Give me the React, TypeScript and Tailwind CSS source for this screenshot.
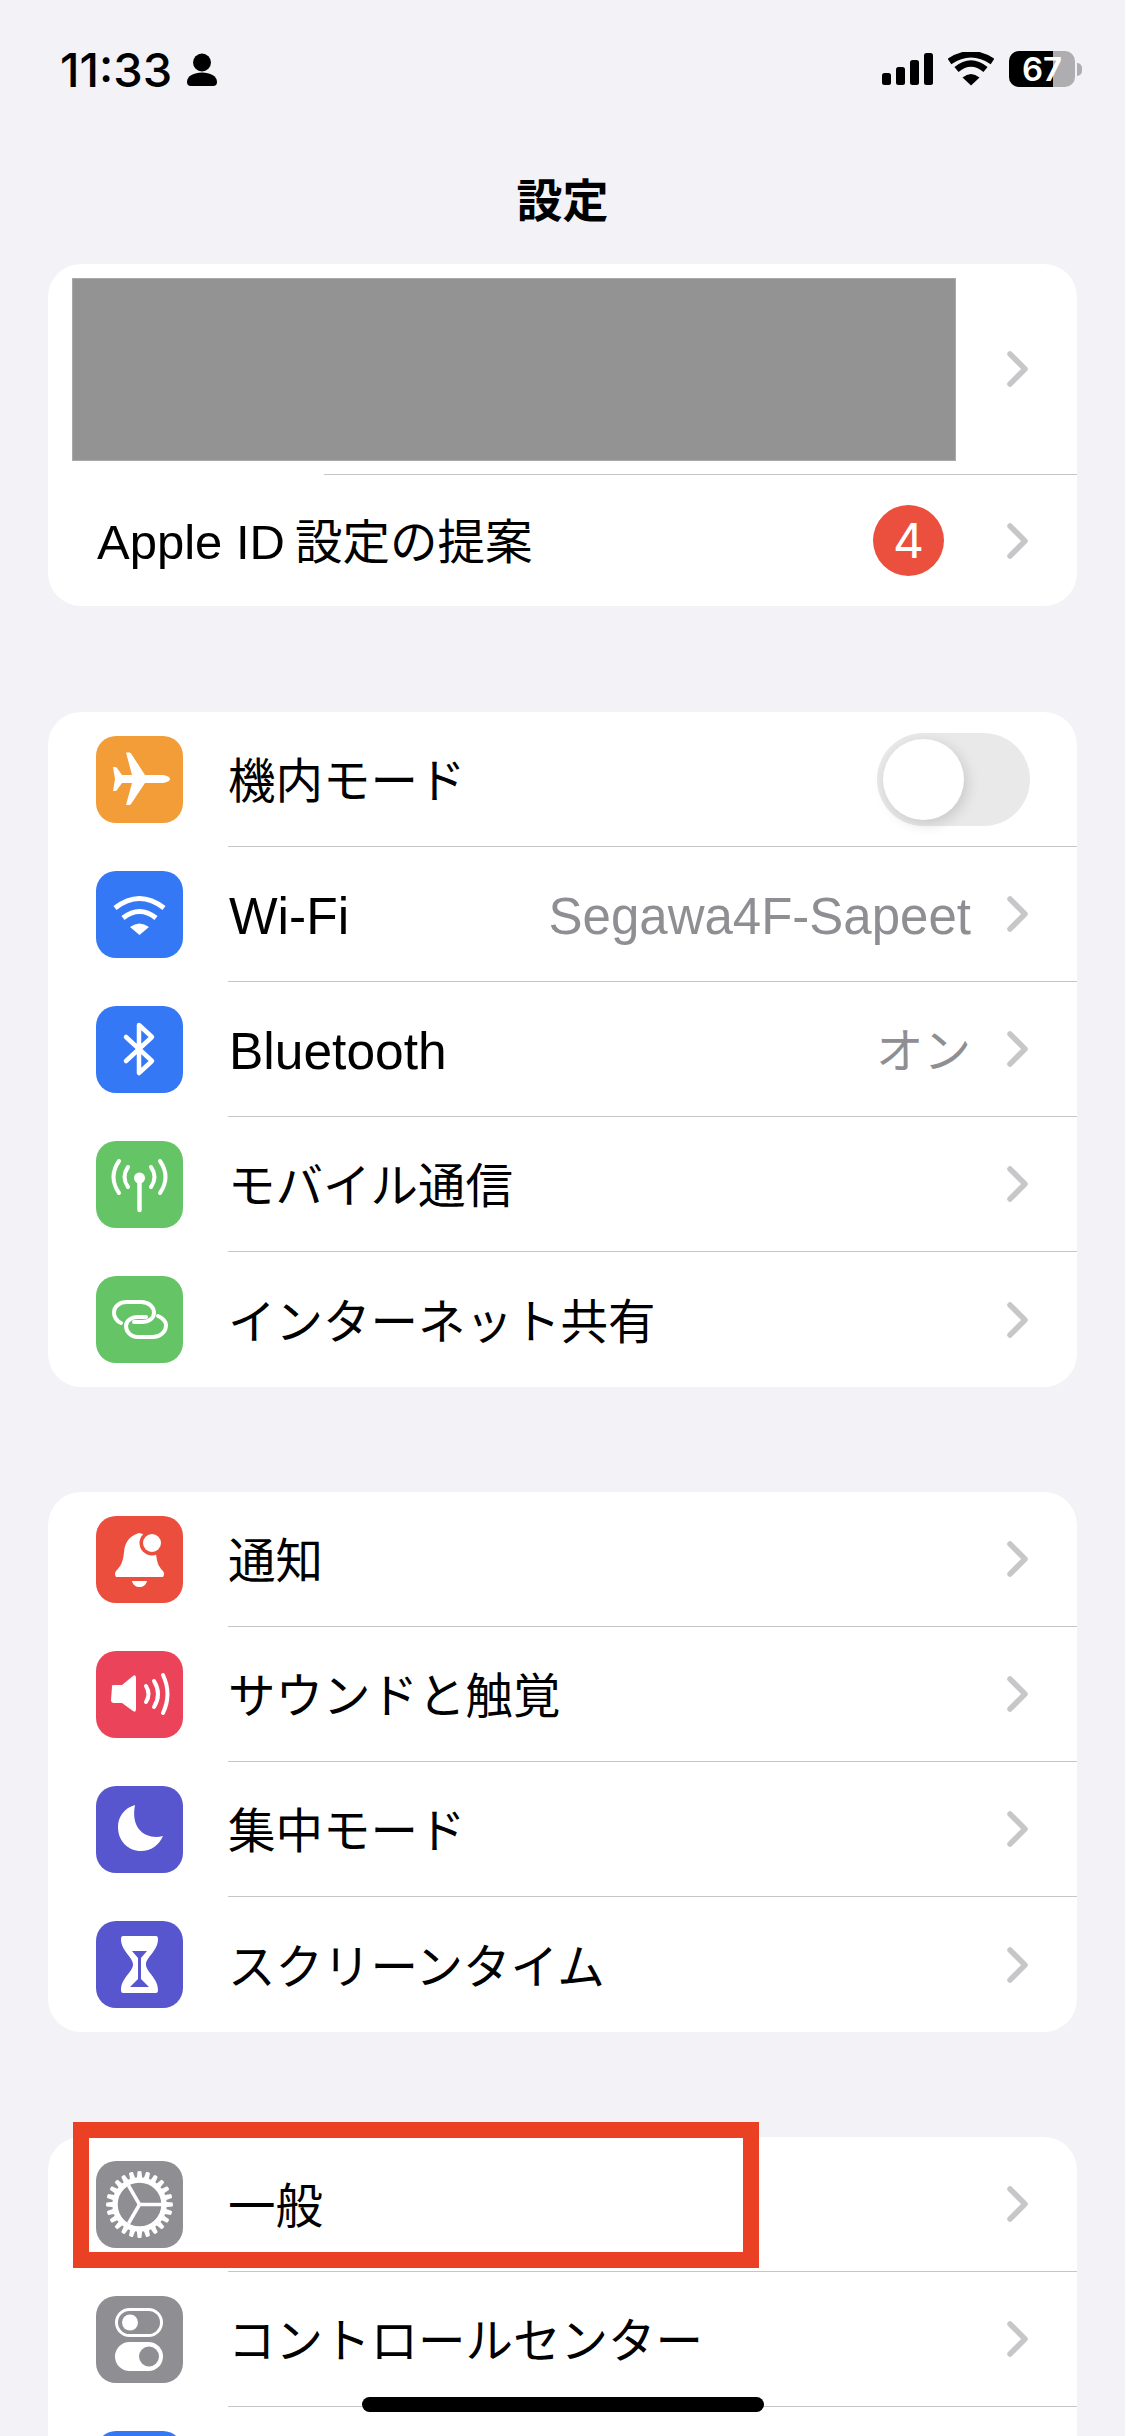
import React from 'react'

type IconProps = { bg: string; children?: React.ReactNode }

function AppIcon({ bg, children }: IconProps) {
  return (
    <div className={`w-[87px] h-[87px] shrink-0 rounded-[20px] ${bg}`}>
      <svg width="87" height="87" viewBox="0 0 87 87">{children}</svg>
    </div>
  )
}

function Chevron() {
  return (
    <svg width="21" height="36" viewBox="0 0 21 36" className="shrink-0">
      <path d="M3 3 L18 18 L3 33" fill="none" stroke="#c7c7c9" strokeWidth="5.5" strokeLinecap="round" strokeLinejoin="round" />
    </svg>
  )
}

const Plane = () => (
  <AppIcon bg="bg-[#f29d38]">
    <path fill="#fff" d="M74 43 C74 41 70 39 65 39 L49 39 L35 17.5 Q34.5 16.5 33 16.5 L30 16.5 L36 39 L26 39 L21 32 Q20.5 31 19 31 L17 31 L19 43 L17 55 L19 55 Q20.5 55 21 54 L26 47 L36 47 L30 69 L33 69 Q34.5 69 35 68 L49 47 L65 47 C70 47 74 45 74 43 Z" />
  </AppIcon>
)

const WifiIcon = () => (
  <AppIcon bg="bg-[#3478f6]">
    <path fill="#fff" d="M43.5 64 L34 56 Q43.5 49 53 56 Z" />
    <path fill="none" stroke="#fff" strokeWidth="5" d="M27 47 Q43.5 34 60 47" />
    <path fill="none" stroke="#fff" strokeWidth="5" d="M19 37 Q43.5 18 68 37" />
  </AppIcon>
)

const BluetoothIcon = () => (
  <AppIcon bg="bg-[#3478f6]">
    <path fill="none" stroke="#fff" strokeWidth="4.5" strokeLinecap="round" strokeLinejoin="round" d="M30 31 L56 55 L43 67 V19 L56 31 L30 55" />
  </AppIcon>
)

const AntennaIcon = () => (
  <AppIcon bg="bg-[#65c466]">
    <circle cx="43.5" cy="37" r="5.5" fill="#fff" />
    <path stroke="#fff" strokeWidth="4.5" strokeLinecap="round" d="M43.5 38 V69" />
    <g fill="none" stroke="#fff" strokeWidth="4" strokeLinecap="round">
      <path d="M32 26 Q25 36 32 46" />
      <path d="M55 26 Q62 36 55 46" />
      <path d="M23 20 Q12 36 23 52" />
      <path d="M64 20 Q75 36 64 52" />
    </g>
  </AppIcon>
)

const LinkIcon = () => (
  <AppIcon bg="bg-[#65c466]">
    <g fill="none" stroke="#fff" strokeWidth="4" strokeLinecap="round">
      <path d="M25 47 C20 45 18 40 18 37 C18 30 24 26 31 26 H45 C53 26 58 31 58 37 C58 42 53 46 46 46 H38" />
      <path d="M62 40 C67 42 70 46 70 49 C70 56 64 61 57 61 H42 C34 61 30 55 30 50 C30 45 35 41 42 41 H50" />
    </g>
  </AppIcon>
)

const BellIcon = () => (
  <AppIcon bg="bg-[#eb4e3d]">
    <path fill="#fff" d="M43 17 C36 19 29 24 28 36 C27 46 25 50 20 55 Q18 58 20 61 H67 Q69 58 67 55 C62 50 61 46 60 38 C58 26 52 18 43 17 Z" />
    <path fill="#fff" d="M36 65 H51 C50 69 47 71 43.5 71 C40 71 37 69 36 65 Z" />
    <circle cx="56" cy="27" r="12.5" fill="#eb4e3d" />
    <circle cx="56" cy="27" r="9" fill="#fff" />
  </AppIcon>
)

const SoundIcon = () => (
  <AppIcon bg="bg-[#eb445a]">
    <path fill="#fff" d="M16 36 Q15 34 18 34 H26 L37 25 Q40 23 40 27 V58 Q40 62 37 60 L26 52 H18 Q15 52 15 49 Z" />
    <g fill="none" stroke="#fff" strokeWidth="4" strokeLinecap="round">
      <path d="M50 35 Q55 43 50 51" />
      <path d="M58 30 Q66 43 58 56" />
      <path d="M67 24 Q76 43 67 62" />
    </g>
  </AppIcon>
)

const MoonIcon = () => (
  <AppIcon bg="bg-[#5856ce]">
    <path fill="#fff" d="M39 19 C28 22 22 31 22 41 C22 55 32 65 45 65 C55 65 63 59 67 50 C52 54 34 45 39 19 Z" />
  </AppIcon>
)

const HourglassIcon = () => (
  <AppIcon bg="bg-[#5856ce]">
    <path fill="#fff" d="M27 15 H60 Q62 15 62 18 C62 30 50 36 50 43.5 C50 51 62 57 62 69 Q62 72 60 72 H27 Q25 72 25 69 C25 57 37 51 37 43.5 C37 36 25 30 25 18 Q25 15 27 15 Z" />
    <path fill="#5856ce" d="M36 30 H51 L45 37 V58 L53 66 H34 L42 58 V37 Z" />
  </AppIcon>
)

const GearIcon = () => (
  <AppIcon bg="bg-[#8e8e93]">
    <circle cx="43.5" cy="43.5" r="24.5" fill="none" stroke="#fff" strokeWidth="5.5" />
    {Array.from({ length: 24 }).map((_, i) => (
      <path key={i} d="M40.5 21 L41.5 10.5 Q43.5 9.5 45.5 10.5 L46.5 21 Z" fill="#fff" transform={`rotate(${i * 15} 43.5 43.5)`} />
    ))}
    <g stroke="#fff" strokeWidth="3.5">
      <path d="M43.5 43.5 H66" />
      <path d="M43.5 43.5 L32.5 24.5" />
      <path d="M43.5 43.5 L32.5 62.5" />
    </g>
  </AppIcon>
)

const SwitchesIcon = () => (
  <AppIcon bg="bg-[#8e8e93]">
    <rect x="20.5" y="13.5" width="45" height="26" rx="13" fill="none" stroke="#fff" strokeWidth="3" />
    <circle cx="34" cy="26.5" r="8" fill="#fff" />
    <rect x="19" y="46" width="48" height="29" rx="14.5" fill="#fff" />
    <circle cx="53" cy="60.5" r="10" fill="#8e8e93" />
  </AppIcon>
)

function Row({ icon, label, value, latin, kanaValue, toggle, last }: {
  icon: React.ReactNode
  label?: string
  value?: string
  latin?: boolean
  kanaValue?: boolean
  toggle?: boolean
  last?: boolean
}) {
  return (
    <div className="flex items-center h-[135px] pl-[48px]">
      {icon}
      <div className={`ml-[45px] flex-1 self-stretch flex items-center justify-between ${toggle ? 'pr-[47px]' : 'pr-[49px]'} ${last ? '' : 'border-b border-[#c6c6c8]'}`}>
        <span className={latin ? "pt-[6px] pl-[1px] font-['Liberation_Sans',sans-serif] text-[51.5px] text-black" : 'pt-[4px] text-[47.5px] text-black'}>{label}</span>
        {toggle ? (
          <div className="relative w-[153px] h-[93px] rounded-full bg-[#e9e9ea]">
            <div className="absolute left-[6px] top-[6px] w-[81px] h-[81px] rounded-full bg-white shadow-[3px_4px_14px_rgba(0,0,0,0.14)]" />
          </div>
        ) : (
          <div className="flex items-center gap-[36px]">
            {value && <span className={kanaValue ? 'pt-[4px] text-[47.5px] text-[#8e8e93]' : "pt-[6px] font-['Liberation_Sans',sans-serif] text-[51px] text-[#8e8e93]"}>{value}</span>}
            <Chevron />
          </div>
        )}
      </div>
    </div>
  )
}

function Card({ first, children }: { first?: boolean; children: React.ReactNode }) {
  return <div className={`mx-[48px] rounded-[33px] bg-white overflow-hidden ${first ? 'mb-[106px]' : 'mb-[105px]'}`}>{children}</div>
}

export default function App() {
  return (
    <div className="relative w-[1125px] h-[2436px] overflow-hidden bg-[#f2f2f7] font-['Inter','Noto_Sans_CJK_JP',sans-serif]">
      <div className="h-[138px] flex items-center justify-between pl-[60px] pr-[43px]">
        <div className="flex items-center gap-[15px]">
          <span className="text-[47px] font-medium text-black leading-none">11:33</span>
          <svg width="30" height="33" viewBox="0 0 30 33">
            <circle cx="15" cy="9.5" r="9" fill="#000" />
            <path fill="#000" d="M0 29 C0 23 7 19.5 15 19.5 C23 19.5 30 23 30 29 Q30 33 26 33 H4 Q0 33 0 29 Z" />
          </svg>
        </div>
        <div className="flex items-center">
          <svg width="52" height="33" viewBox="0 0 52 33" className="mr-[14px]">
            <rect x="0" y="20" width="9" height="12" rx="2.5" />
            <rect x="14" y="14" width="9" height="18" rx="2.5" />
            <rect x="28" y="7" width="9" height="25" rx="2.5" />
            <rect x="42" y="0" width="9" height="32" rx="2.5" />
          </svg>
          <svg width="46" height="34" viewBox="0 0 46 34" className="mr-[15px]">
            <path fill="#000" d="M23 33.5 L14.5 25.5 Q23 18.5 31.5 25.5 Z" />
            <path fill="none" stroke="#000" strokeWidth="6.5" d="M8.5 17.5 Q23 5.5 37.5 17.5" />
            <path fill="none" stroke="#000" strokeWidth="6.5" d="M1.5 9.5 Q23 -5 44.5 9.5" />
          </svg>
          <div className="relative w-[66px] h-[36px] rounded-[10px] bg-[#aeaeb0] flex items-center justify-center">
            <div className="absolute left-0 top-0 bottom-0 w-[44px] rounded-l-[10px] bg-black" />
            <span className="relative text-[33px] font-semibold text-white leading-none">67</span>
          </div>
          <div className="ml-[2px] w-[5px] h-[13px] rounded-r-full bg-[#aeaeb0]" />
        </div>
      </div>

      <div className="h-[126px] pb-[2px] flex items-center justify-center">
        <span className="text-[46px] font-bold text-black leading-none">設定</span>
      </div>

      <Card first>
        <div className="h-[210px] flex items-center pr-[49px]">
          <div className="self-start ml-[24px] mt-[14px] w-[884px] h-[183px] bg-[#939393] border border-[#a9a9a9]" />
          <div className="flex-1" />
          <Chevron />
        </div>
        <div className="h-px ml-[276px] bg-[#c6c6c8]" />
        <div className="h-[131px] flex items-center justify-between pl-[49px] pr-[49px]">
          <span className="pt-[5px] text-[47.5px] text-black">
            <span className="font-['Liberation_Sans',sans-serif] text-[49px]">Apple ID</span>
            <span className="ml-[10px]">設定の提案</span>
          </span>
          <div className="flex items-center gap-[63px]">
            <div className="w-[71px] h-[71px] rounded-full bg-[#eb4f3d] flex items-center justify-center text-[48px] text-white leading-none">4</div>
            <Chevron />
          </div>
        </div>
      </Card>

      <Card>
        <Row icon={<Plane />} label="機内モード" toggle />
        <Row icon={<WifiIcon />} label="Wi-Fi" latin value="Segawa4F-Sapeet" />
        <Row icon={<BluetoothIcon />} label="Bluetooth" latin value="オン" kanaValue />
        <Row icon={<AntennaIcon />} label="モバイル通信" />
        <Row icon={<LinkIcon />} label="インターネット共有" last />
      </Card>

      <Card>
        <Row icon={<BellIcon />} label="通知" />
        <Row icon={<SoundIcon />} label="サウンドと触覚" />
        <Row icon={<MoonIcon />} label="集中モード" />
        <Row icon={<HourglassIcon />} label="スクリーンタイム" last />
      </Card>

      <Card>
        <Row icon={<GearIcon />} label="一般" />
        <Row icon={<SwitchesIcon />} label="コントロールセンター" />
        <Row icon={<AppIcon bg="bg-[#3478f6]" />} last />
      </Card>

      {/* annotation box over the 一般 row */}
      <div className="absolute left-[73px] top-[2122px] w-[686px] h-[146px] border-[16px] border-[#ea4024]" />
      {/* home indicator */}
      <div className="absolute left-[362px] top-[2397px] w-[402px] h-[15px] rounded-full bg-black" />
    </div>
  )
}
